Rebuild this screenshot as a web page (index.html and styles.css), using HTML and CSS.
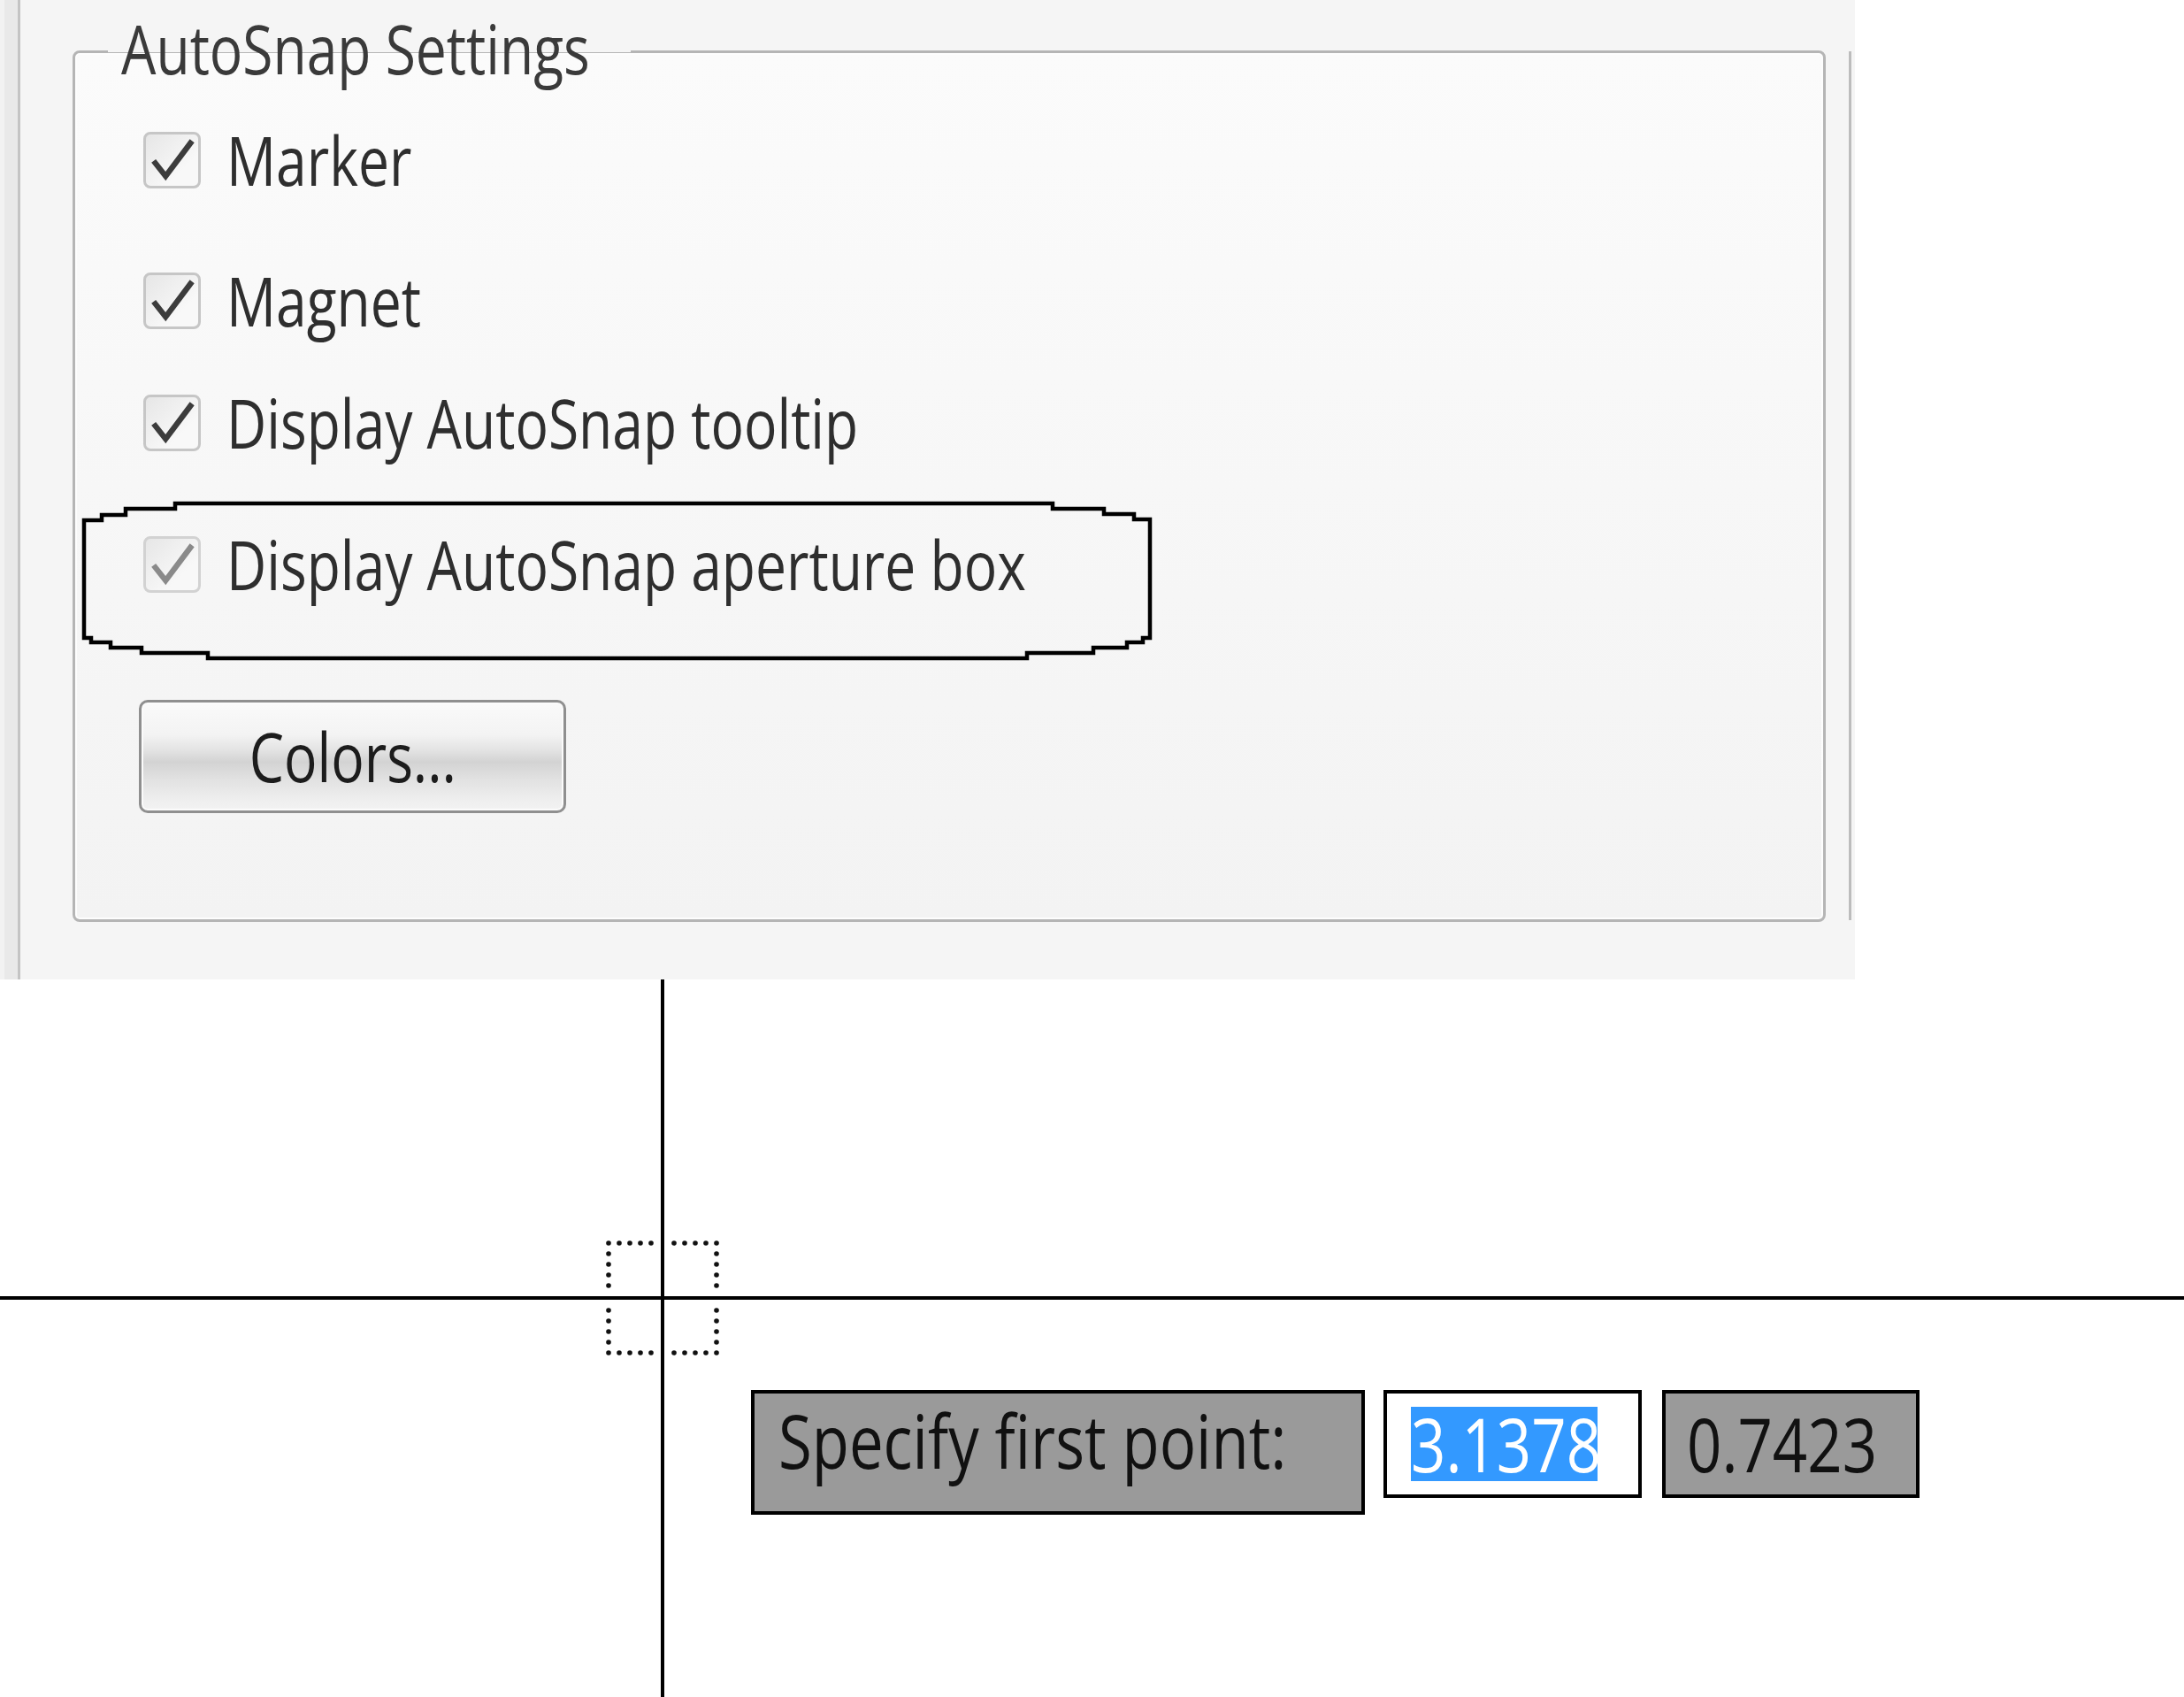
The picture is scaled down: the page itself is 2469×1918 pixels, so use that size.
FILE: index.html
```html
<!DOCTYPE html>
<html lang="en">
<head>
<meta charset="utf-8">
<title>AutoSnap Settings</title>
<link rel="stylesheet" href="styles.css">
</head>
<body>
<div class="dialog">
  <div class="edge"></div>
  <div class="body">
    <div class="group">
      <div class="legend"><span class="sq">AutoSnap Settings</span></div>
      <div class="opt r1">
        <div class="cb"><svg viewBox="0 0 64 64"><path d="M9 33 L24 52 L57 8"/></svg></div>
        <span class="sq label">Marker</span>
      </div>
      <div class="opt r2">
        <div class="cb"><svg viewBox="0 0 64 64"><path d="M9 33 L24 52 L57 8"/></svg></div>
        <span class="sq label">Magnet</span>
      </div>
      <div class="opt r3">
        <div class="cb"><svg viewBox="0 0 64 64"><path d="M9 33 L24 52 L57 8"/></svg></div>
        <span class="sq label">Display AutoSnap tooltip</span>
      </div>
      <div class="opt r4">
        <div class="cb faded"><svg viewBox="0 0 64 64"><path d="M9 33 L24 52 L57 8"/></svg></div>
        <span class="sq label">Display AutoSnap aperture box</span>
      </div>
      <button class="btn"><span class="sqc">Colors...</span></button>
    </div>
  </div>
  <div class="rail"></div>
  <svg class="circled" viewBox="0 0 1216 184" width="1216" height="184">
    <path d="M5 24 H25 V18 H52 V11 H108 V5 H1100 V11 H1158 V17 H1192 V23 H1210 V157 H1202 V162 H1184 V168 H1146 V174 H1071 V180 H145 V174 H70 V168 H35 V162 H13 V157 H5 Z"/>
  </svg>
</div>
<div class="canvas">
  <div class="vline"></div>
  <div class="hline"></div>
  <svg class="aperture" viewBox="0 0 140 140" width="140" height="140">
    <g>
      <circle cx="8" cy="8" r="2.8"/><circle cx="20" cy="8" r="2.8"/><circle cx="32" cy="8" r="2.8"/><circle cx="44" cy="8" r="2.8"/><circle cx="56" cy="8" r="2.8"/>
      <circle cx="82" cy="8" r="2.8"/><circle cx="94" cy="8" r="2.8"/><circle cx="106" cy="8" r="2.8"/><circle cx="118" cy="8" r="2.8"/><circle cx="130" cy="8" r="2.8"/>
      <circle cx="8" cy="132" r="2.8"/><circle cx="20" cy="132" r="2.8"/><circle cx="32" cy="132" r="2.8"/><circle cx="44" cy="132" r="2.8"/><circle cx="56" cy="132" r="2.8"/>
      <circle cx="82" cy="132" r="2.8"/><circle cx="94" cy="132" r="2.8"/><circle cx="106" cy="132" r="2.8"/><circle cx="118" cy="132" r="2.8"/><circle cx="130" cy="132" r="2.8"/>
      <circle cx="8" cy="20" r="2.8"/><circle cx="8" cy="32" r="2.8"/><circle cx="8" cy="44" r="2.8"/><circle cx="8" cy="56" r="2.8"/>
      <circle cx="8" cy="84" r="2.8"/><circle cx="8" cy="96" r="2.8"/><circle cx="8" cy="108" r="2.8"/><circle cx="8" cy="120" r="2.8"/>
      <circle cx="130" cy="20" r="2.8"/><circle cx="130" cy="32" r="2.8"/><circle cx="130" cy="44" r="2.8"/><circle cx="130" cy="56" r="2.8"/>
      <circle cx="130" cy="84" r="2.8"/><circle cx="130" cy="96" r="2.8"/><circle cx="130" cy="108" r="2.8"/><circle cx="130" cy="120" r="2.8"/>
    </g>
  </svg>
  <div class="dyn">
    <div class="prompt"><span class="sq">Specify first point:</span></div>
    <div class="field"><span class="sel"><span class="sq">3.1378</span></span></div>
    <div class="value"><span class="sq">0.7423</span></div>
  </div>
</div>
</body>
</html>
```
FILE: styles.css
```css
html, body {
  margin: 0;
  padding: 0;
  background: #ffffff;
}

body {
  font-family: "Open Sans", "Noto Sans", sans-serif;
  width: 2469px;
  height: 1918px;
  overflow: hidden;
}

.sq {
  display: inline-block;
  white-space: nowrap;
  transform: scaleX(0.82);
  transform-origin: left center;
}

.sqc {
  display: inline-block;
  white-space: nowrap;
  transform: scaleX(0.82);
  transform-origin: center center;
}

/* ---------- dialog panel ---------- */
.dialog {
  position: relative;
  display: flex;
  width: 2097px;
  height: 1107px;
  background: #f5f5f5;
}

.edge {
  width: 20px;
  flex: none;
  background: linear-gradient(to right, #f2f2f2 0, #f2f2f2 5px, #e9e9e9 5px);
  border-right: 3px solid #c4c4c4;
}

.body {
  flex: 1;
  padding: 57px 0 0 59px;
}

.rail {
  flex: none;
  width: 3px;
  height: 982px;
  margin: 58px 4px 0 0;
  background: #bcbcbc;
}

.group {
  box-sizing: border-box;
  width: 1982px;
  height: 985px;
  border: 3px solid #b5b5b5;
  border-radius: 8px;
  background: linear-gradient(to bottom, #fbfbfb, #f3f3f3);
  box-shadow: inset 0 0 0 2px #fdfdfd;
  color: #2e2e2e;
  font-size: 76px;
  line-height: 76px;
}

.legend {
  width: 591px;
  height: 76px;
  margin: -43px 0 0 37px;
  padding-left: 15px;
  box-sizing: border-box;
  background: linear-gradient(to bottom, #f5f5f5 0, #f5f5f5 42px, transparent 42px);
  color: #3a3a3a;
}

.opt {
  display: flex;
  align-items: center;
  gap: 29px;
  height: 64px;
  margin-left: 77px;
}

.r1 { margin-top: 56px; }
.r2 { margin-top: 95px; }
.r3 { margin-top: 74px; }
.r4 { margin-top: 96px; }

.cb {
  box-sizing: border-box;
  width: 65px;
  height: 64px;
  flex: none;
  border: 3px solid #c6c6c6;
  border-radius: 8px;
  background: linear-gradient(135deg, #e6e6e6, #f8f8f8 70%);
}

.cb svg {
  display: block;
  width: 59px;
  height: 58px;
  overflow: visible;
}

.cb path {
  fill: none;
  stroke: #3c3c3c;
  stroke-width: 7;
  stroke-linejoin: miter;
}

.cb.faded {
  border-color: #d2d2d2;
}

.cb.faded path {
  stroke: #8a8a8a;
}

.label {
  color: #2e2e2e;
}

.btn {
  display: block;
  box-sizing: border-box;
  width: 483px;
  height: 128px;
  margin: 121px 0 0 72px;
  padding: 0;
  border: 3px solid #8f8f8f;
  border-radius: 10px;
  background: linear-gradient(to bottom, #fafafa 0%, #f3f3f3 30%, #e2e2e2 45%, #d3d3d3 55%, #e2e2e2 72%, #ededed 88%, #f3f3f3 100%);
  box-shadow: inset 0 0 0 2px #fbfbfb;
  font-family: "Open Sans", "Noto Sans", sans-serif;
  font-size: 76px;
  line-height: 76px;
  color: #1c1c1c;
  text-align: center;
}

.circled {
  position: absolute;
  left: 90px;
  top: 564px;
}

.circled path {
  fill: none;
  stroke: #000;
  stroke-width: 4.5;
}

/* ---------- drawing canvas ---------- */
.canvas {
  position: relative;
  width: 2469px;
  height: 811px;
  background: #ffffff;
  overflow: hidden;
}

.vline {
  position: absolute;
  left: 747px;
  top: 0;
  width: 4px;
  height: 100%;
  background: #000;
}

.hline {
  position: absolute;
  left: 0;
  top: 358px;
  width: 100%;
  height: 4px;
  background: #000;
}

.aperture {
  position: absolute;
  left: 680px;
  top: 290px;
}

.aperture circle {
  fill: #111;
}

.dyn {
  position: absolute;
  left: 849px;
  top: 464px;
  display: flex;
  align-items: flex-start;
  font-size: 84px;
  line-height: 84px;
  color: #111;
}

.prompt {
  box-sizing: border-box;
  width: 694px;
  height: 141px;
  padding: 11px 0 0 27px;
  border: 4px solid #000;
  background: #9a9a9a;
}

.field {
  box-sizing: border-box;
  width: 292px;
  height: 122px;
  margin-left: 21px;
  padding: 15px 0 0 27px;
  border: 4px solid #000;
  background: #ffffff;
}

.sel {
  display: inline-block;
  width: 211px;
  height: 84px;
  background: #3399ff;
  color: #ffffff;
}

.value {
  box-sizing: border-box;
  width: 291px;
  height: 122px;
  margin-left: 23px;
  padding: 15px 0 0 24px;
  border: 4px solid #000;
  background: #9a9a9a;
}
```
